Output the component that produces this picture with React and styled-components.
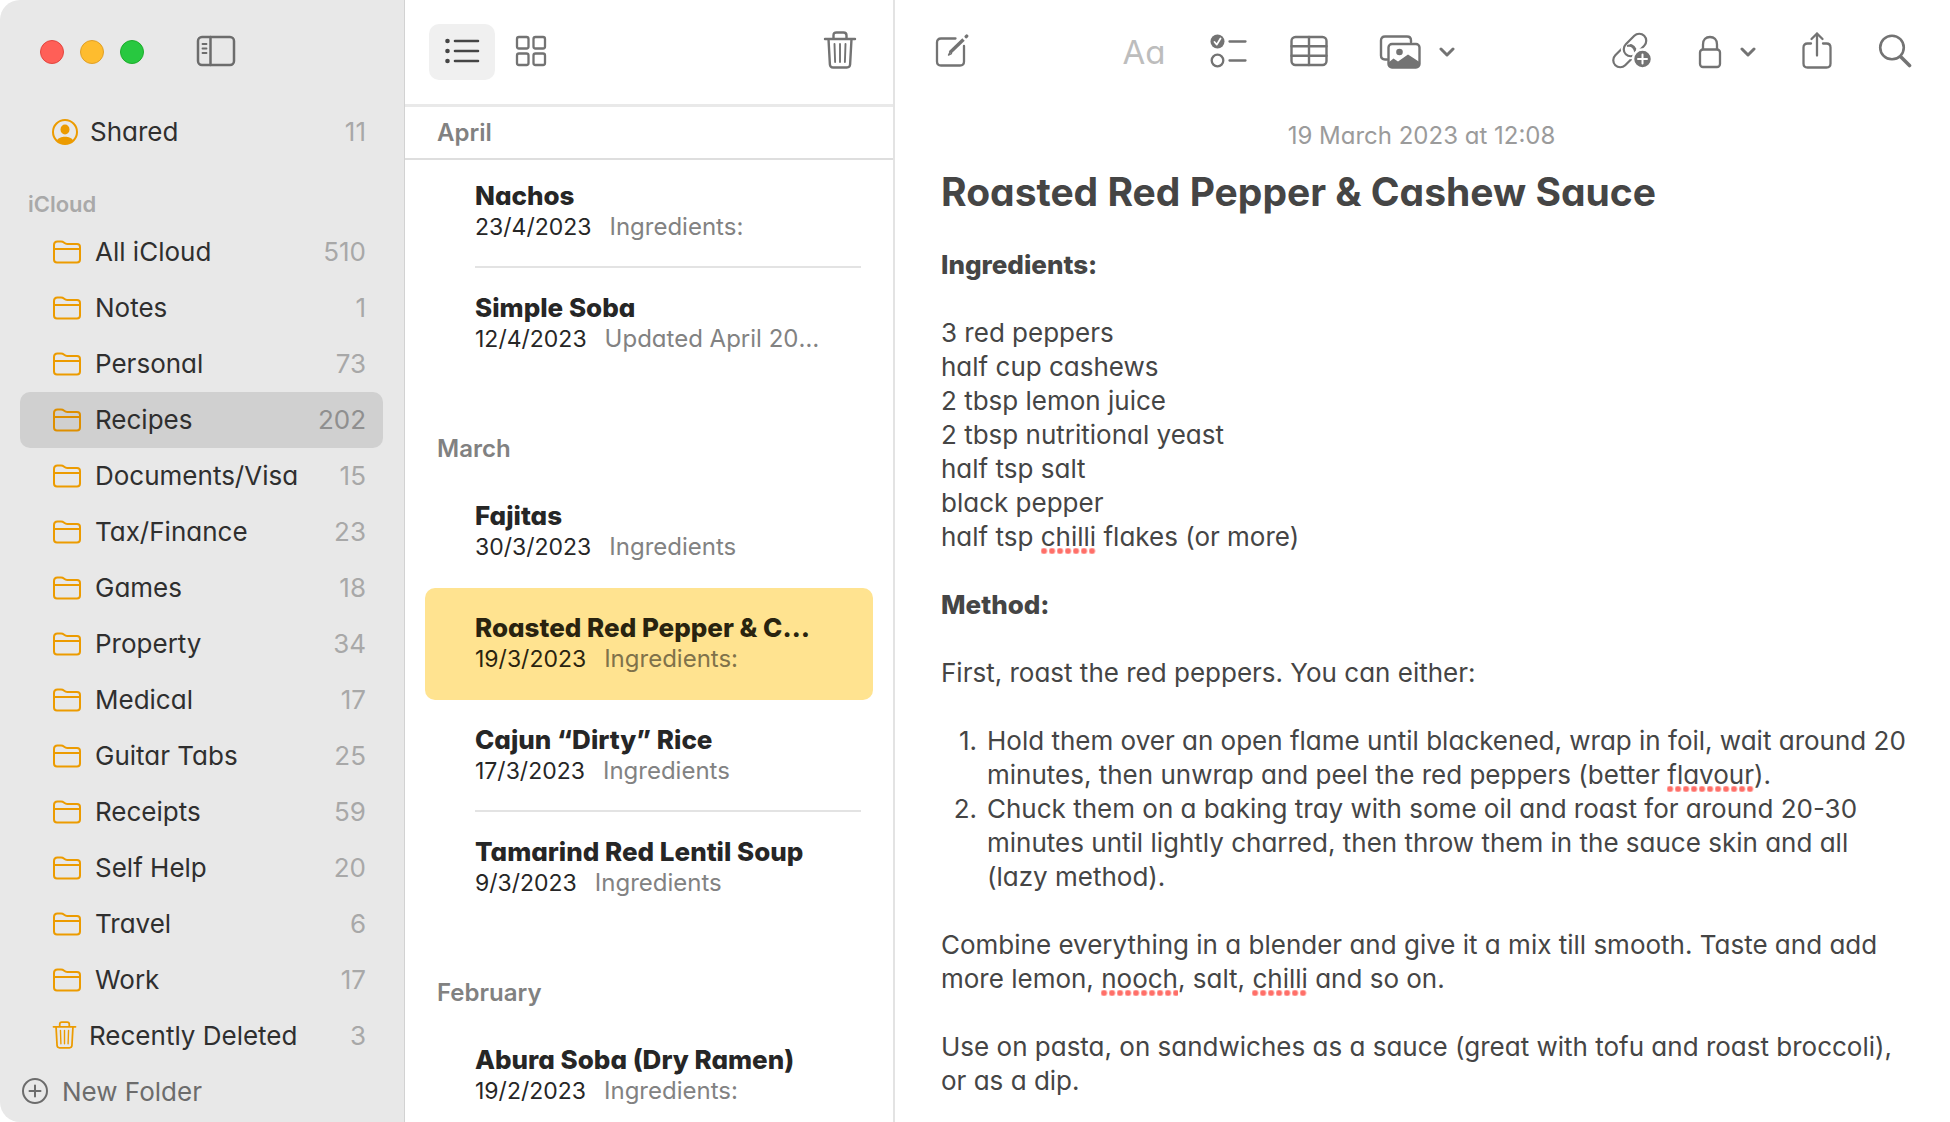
import React from "react";
import styled, { createGlobalStyle } from "styled-components";

const Global = createGlobalStyle`
  *, *::before, *::after { box-sizing: border-box; }
  body {
    margin: 0;
    background: #fff;
    font-family: Inter, "Liberation Sans", sans-serif;
    font-feature-settings: "cv11";
  }
  button { font: inherit; font-feature-settings: inherit; color: inherit; border: 0; background: none; padding: 0; text-align: left; }
  h1, h2, p, ul, ol { margin: 0; padding: 0; }
  ul, ol { list-style: none; }
  b { font-weight: 800; }
`;

const Window = styled.div`
  display: grid;
  grid-template-columns: 405px 490px minmax(0, 1fr);
  height: 100vh;
  overflow: hidden;
  border-radius: 20px;
  background: #fff;
`;

/* Sidebar */
const Sidebar = styled.aside`
  display: flex;
  flex-direction: column;
  background: #e8e8e8;
  border-right: 1px solid #d2d2d2;
  padding: 0 21px 0 20px;
`;
const SidebarBar = styled.div`
  display: flex;
  align-items: center;
  height: 104px;
  padding-left: 20px;
  gap: 16px;
`;
const Light = styled.button`
  width: 24px;
  height: 24px;
  border-radius: 50%;
  background: ${(p) => p.$fill};
  border: 1px solid ${(p) => p.$edge};
`;
const IconButton = styled.button`
  display: inline-flex;
  align-items: center;
  gap: 18px;
  color: ${(p) => p.$color || "#737373"};
  margin-left: ${(p) => p.$left || 0}px;
`;
const FolderRow = styled.button`
  display: flex;
  align-items: center;
  width: 100%;
  height: 56px;
  padding: 0 17px 0 32px;
  gap: ${(p) => p.$gap || 13}px;
  border-radius: 10px;
  background: ${(p) => (p.$active ? "#d0d0d0" : "transparent")};
  color: #2f2f2f;
  font-size: 26px;
  line-height: 32px;
  svg { flex: none; color: ${(p) => (p.$active ? "#de8f00" : "#ec9b00")}; }
`;
const FolderName = styled.span`
  flex: 1;
  white-space: nowrap;
`;
const Count = styled.span`
  color: ${(p) => (p.$active ? "#8f8f8f" : "#a8a8a8")};
`;
const Account = styled.h2`
  height: 64px;
  padding: 30px 0 0 8px;
  font-size: 22px;
  line-height: 28px;
  font-weight: 600;
  color: #a9a9a9;
`;
const NewFolder = styled.button`
  display: flex;
  align-items: center;
  height: 56px;
  gap: 13px;
  padding-left: 1px;
  font-size: 26px;
  line-height: 32px;
  color: #6c6c6c;
`;

/* Notes list */
const NotesPane = styled.section`
  display: flex;
  flex-direction: column;
  min-height: 0;
  overflow: hidden;
  border-right: 2px solid #e3e3e3;
`;
const NotesBar = styled.header`
  flex: none;
  display: flex;
  align-items: center;
  gap: 3px;
  height: 107px;
  padding: 0 36px 0 24px;
  border-bottom: 3px solid #e9e9e9;
`;
const ViewButton = styled.button`
  display: grid;
  place-items: center;
  width: 66px;
  height: 56px;
  border-radius: 10px;
  background: ${(p) => (p.$active ? "#f0f0f0" : "transparent")};
  color: ${(p) => (p.$active ? "#454545" : "#737373")};
`;
const Spacer = styled.div`
  flex: 1;
`;
const Month = styled.h2`
  flex: none;
  height: 96px;
  padding: 54px 32px 0;
  font-size: 24px;
  line-height: 30px;
  font-weight: 600;
  font-feature-settings: normal;
  color: #818181;
`;
const PinnedMonth = styled(Month)`
  height: 53px;
  padding: 11px 32px 0;
  border-bottom: 2px solid #dedede;
  margin-bottom: -4px;
`;
const NoteList = styled.ul`
  flex: none;
  padding: 0 20px;
`;
const NoteRow = styled.button`
  display: block;
  width: 100%;
  height: 112px;
  padding: 0 12px 0 50px;
  border-radius: 10px;
  background: ${(p) => (p.$active ? "#ffe390" : "transparent")};
`;
const NoteBody = styled.div`
  height: 112px;
  padding: 24px 0 0;
  border-bottom: 2px solid ${(p) => (p.$rule ? "#e3e3e3" : "transparent")};
`;
const NoteTitle = styled.div`
  max-width: 345px;
  overflow: hidden;
  text-overflow: ellipsis;
  white-space: nowrap;
  font-size: 26px;
  line-height: 32px;
  font-weight: 800;
  color: ${(p) => (p.$active ? "#29230f" : "#262626")};
`;
const NoteMeta = styled.div`
  display: flex;
  align-items: baseline;
  gap: 18px;
  max-width: 345px;
  font-size: 23px;
  line-height: 30px;
  color: ${(p) => (p.$active ? "#29230f" : "#262626")};
`;
const Preview = styled.span`
  overflow: hidden;
  text-overflow: ellipsis;
  white-space: nowrap;
  font-size: 24px;
  color: ${(p) => (p.$active ? "#80724a" : "#828282")};
`;

/* Editor */
const Editor = styled.main`
  min-width: 0;
  overflow: hidden;
`;
const EditorBar = styled.header`
  display: flex;
  align-items: center;
  height: 104px;
  padding: 0 38px 0 40px;
`;
const Stretch = styled.div`
  flex: ${(p) => p.$grow};
`;
const Tools = styled.div`
  display: flex;
  align-items: center;
  gap: ${(p) => p.$gap}px;
`;
const TextStyle = styled.button`
  font-size: 33px;
  line-height: 40px;
  color: #bdbdbd;
`;
const Page = styled.article`
  padding: 15px 40px 0 46px;
  color: #454545;
  font-size: 26px;
  line-height: 34px;
`;
const Stamp = styled.p`
  padding-right: 8px;
  text-align: center;
  font-size: 24px;
  color: #9b9b9b;
`;
const Title = styled.h1`
  padding: 13px 0 30px;
  font-size: 39px;
  line-height: 52px;
  font-weight: 700;
`;
const Para = styled.p`
  padding-bottom: 34px;
`;
const Line = styled.span`
  display: block;
`;
const Steps = styled.ol`
  padding-bottom: 34px;
`;
const Step = styled.li`
  display: grid;
  grid-template-columns: 36px minmax(0, 1fr);
  column-gap: 10px;
`;
const Num = styled.span`
  text-align: right;
`;
const Typo = styled.span`
  background: radial-gradient(circle at 3px 3px, #ff6f68 2px, #ff6f6800 4px) 0 100% / 8px 6px repeat-x;
  padding-bottom: 2px;
`;

/* Icons */
const Svg = ({ w, h, sw = 2, children }) => (
  <svg width={w} height={h} viewBox={`0 0 ${w} ${h}`} fill="none" stroke="currentColor" strokeWidth={sw} strokeLinecap="round" strokeLinejoin="round" aria-hidden="true">
    {children}
  </svg>
);
const SidebarIcon = () => (
  <Svg w={40} h={34} sw={2.5}>
    <rect x="2" y="2" width="36" height="28" rx="4" />
    <path d="M14.500 2v28" />
    <path d="M6.500 9h4M6.500 13.500h4M6.500 18h4" strokeWidth="1.800" />
  </Svg>
);
const PersonIcon = () => (
  <Svg w={26} h={26}>
    <circle cx="13" cy="13" r="12" />
    <ellipse cx="13" cy="10.500" rx="4.500" ry="5" fill="currentColor" stroke="none" />
    <path d="M5 21.500c1-2.600 4.500-3.700 8-3.700s7 1.100 8 3.700c-2 2-5 3.500-8 3.500s-6-1.500-8-3.500z" fill="currentColor" stroke="none" />
  </Svg>
);
const FolderIcon = () => (
  <Svg w={30} h={24}>
    <path d="M2 5q0-3.500 3.500-3.500h3.500c1.500 0 2.300.5 3.200 1.200.9.800 1.600 1.200 3 1.200h9.800q3 0 3 3v12.500q0 3-3 3H5q-3 0-3-3z" />
    <path d="M2 9h26" />
  </Svg>
);
const TrashIcon = ({ w, h, room = 40 }) => (
  <svg width={w} height={h} viewBox={`0 0 34 ${room}`} fill="none" stroke="currentColor" strokeWidth="2.400" strokeLinecap="round" strokeLinejoin="round" aria-hidden="true">
    <path d="M2 9h30M10.500 9V5.500q0-3 3-3h7q3 0 3 3V9M5.500 9l1.400 25.500q.2 3 3.200 3h13.800q3 0 3.200-3L28.500 9" />
    <path d="M11.500 14l.6 18M17 14v18M22.500 14l-.6 18" strokeWidth="1.900" />
  </svg>
);
const PlusCircle = () => (
  <Svg w={28} h={28}>
    <circle cx="14" cy="13" r="12" />
    <path d="M14 7.500v11M8.500 13h11" />
  </Svg>
);
const ListIcon = () => (
  <Svg w={36} h={30} sw={2.6}>
    <path d="M11 4h23M11 14h23M11 24h23" />
    <g fill="currentColor" stroke="none">
      <circle cx="3.500" cy="4" r="2.300" />
      <circle cx="3.500" cy="14" r="2.300" />
      <circle cx="3.500" cy="24" r="2.300" />
    </g>
  </Svg>
);
const GridIcon = () => (
  <Svg w={32} h={34} sw={2.3}>
    <rect x="2" y="2" width="11.500" height="11.500" rx="2" />
    <rect x="18.500" y="2" width="11.500" height="11.500" rx="2" />
    <rect x="2" y="18.500" width="11.500" height="11.500" rx="2" />
    <rect x="18.500" y="18.500" width="11.500" height="11.500" rx="2" />
  </Svg>
);
const ComposeIcon = () => (
  <Svg w={34} h={38} sw={2.3}>
    <path d="M20.500 5.500H6q-4 0-4 4V28.500q0 4 4 4h19q4 0 4-4V13" />
    <path d="M28.500 6.500L15 19.500" strokeWidth="3.400" strokeLinecap="butt" />
    <path d="M15 19l-1.500 3 3-1.400" strokeWidth="1.400" />
    <path d="M31.200 3.600l.5-.5" strokeWidth="3.400" />
  </Svg>
);
const ChecklistIcon = () => (
  <Svg w={38} h={38} sw={2.3}>
    <circle cx="8.500" cy="8.500" r="7" fill="currentColor" stroke="none" />
    <path d="M5.500 9l2.300 2.600L11.500 5.500" stroke="#fff" strokeWidth="1.800" />
    <circle cx="8.500" cy="27.500" r="5.800" />
    <path d="M20.500 8.500h16M20.500 27.500h16" />
  </Svg>
);
const TableIcon = () => (
  <Svg w={38} h={34} sw={2.4}>
    <rect x="1.500" y="2" width="35" height="28" rx="4" />
    <path d="M1.500 11.300h35M1.500 20.700h35M19 2v28" />
  </Svg>
);
const MediaIcon = () => (
  <Svg w={42} h={36} sw={2.4}>
    <path d="M8 25.500H6q-4 0-4-4V6.500q0-4 4-4h22q4 0 4 4V8" />
    <rect x="9.500" y="10" width="31" height="23.500" rx="3.500" />
    <circle cx="20.500" cy="18" r="3.300" fill="currentColor" stroke="none" />
    <path d="M9.500 28.500l5-4 4.500 3L29 20.500 40.500 28v3q0 2.500-3 2.500h-25q-3 0-3-2.500z" fill="currentColor" stroke="none" />
  </Svg>
);
const Chevron = () => (
  <Svg w={16} h={12} sw={3}>
    <path d="M2 3l6 6 6-6" />
  </Svg>
);
const LinkIcon = () => (
  <Svg w={40} h={40} sw={2.2}>
    <rect x="-13" y="-7" width="26" height="14" rx="7" transform="translate(12.500 24) rotate(-45)" />
    <rect x="-13" y="-7" width="26" height="14" rx="7" transform="translate(23 13) rotate(-45)" stroke="#fff" strokeWidth="6" />
    <rect x="-13" y="-7" width="26" height="14" rx="7" transform="translate(23 13) rotate(-45)" />
    <path d="M16 13.800c3.500-.8 7.200 2 7.200 6.400" />
    <circle cx="30.500" cy="27" r="9.500" fill="currentColor" stroke="#fff" strokeWidth="2.500" />
    <path d="M30.500 22.500v9M26 27h9" stroke="#fff" strokeWidth="2" />
  </Svg>
);
const LockIcon = () => (
  <Svg w={24} h={36} sw={2.3}>
    <rect x="2" y="15.500" width="20" height="17.500" rx="3" />
    <path d="M5 15V10.500c0-5 3-7.500 7-7.500s7 2.500 7 7.500v4.500" />
  </Svg>
);
const ShareIcon = () => (
  <Svg w={30} h={42} sw={2.3}>
    <path d="M9 12.500H5.500q-4 0-4 4V32.500q0 4 4 4h19q4 0 4-4V16.500q0-4-4-4H21" />
    <path d="M15 24.500V2.500M9.500 8L15 2.500l5.500 5.500" />
  </Svg>
);
const SearchIcon = () => (
  <Svg w={34} h={36} sw={2.6}>
    <circle cx="14" cy="13.500" r="11.800" />
    <path d="M23 23l8.500 8.500" strokeWidth="3.600" />
  </Svg>
);

const folders = [
  ["All iCloud", 510], ["Notes", 1], ["Personal", 73], ["Recipes", 202], ["Documents/Visa", 15],
  ["Tax/Finance", 23], ["Games", 18], ["Property", 34], ["Medical", 17], ["Guitar Tabs", 25],
  ["Receipts", 59], ["Self Help", 20], ["Travel", 6], ["Work", 17],
];
const april = [
  { title: "Nachos", date: "23/4/2023", preview: "Ingredients:", rule: true },
  { title: "Simple Soba", date: "12/4/2023", preview: "Updated April 2023" },
];
const march = [
  { title: "Fajitas", date: "30/3/2023", preview: "Ingredients" },
  { title: "Roasted Red Pepper & Cashew Sauce", date: "19/3/2023", preview: "Ingredients:", active: true },
  { title: "Cajun “Dirty” Rice", date: "17/3/2023", preview: "Ingredients", rule: true },
  { title: "Tamarind Red Lentil Soup", date: "9/3/2023", preview: "Ingredients" },
];
const february = [{ title: "Abura Soba (Dry Ramen)", date: "19/2/2023", preview: "Ingredients:" }];

const Folder = ({ icon, name, count, active, gap }) => (
  <li>
    <FolderRow $active={active} $gap={gap}>
      {icon}
      <FolderName>{name}</FolderName>
      <Count $active={active}>{count}</Count>
    </FolderRow>
  </li>
);
const Notes = ({ items }) => (
  <NoteList>
    {items.map((n) => (
      <li key={n.title}>
        <NoteRow $active={n.active}>
          <NoteBody $rule={n.rule}>
            <NoteTitle $active={n.active}>{n.title}</NoteTitle>
            <NoteMeta $active={n.active}>
              <span>{n.date}</span>
              <Preview $active={n.active}>{n.preview}</Preview>
            </NoteMeta>
          </NoteBody>
        </NoteRow>
      </li>
    ))}
  </NoteList>
);

export default function App() {
  return (
    <>
      <Global />
      <Window>
        <Sidebar>
          <SidebarBar>
            <Light $fill="#ff5f57" $edge="#e2463f" aria-label="Close" />
            <Light $fill="#febc2e" $edge="#e0a028" aria-label="Minimise" />
            <Light $fill="#28c840" $edge="#1dad2b" aria-label="Zoom" />
            <IconButton $left={36} $color="#6c6c6c" aria-label="Toggle sidebar"><SidebarIcon /></IconButton>
          </SidebarBar>
          <ul>
            <Folder icon={<PersonIcon />} name="Shared" count={11} gap={12} />
          </ul>
          <Account>iCloud</Account>
          <ul>
            {folders.map(([name, count]) => (
              <Folder key={name} icon={<FolderIcon />} name={name} count={count} active={name === "Recipes"} />
            ))}
            <Folder icon={<TrashIcon w={25} h={32} room={43} />} name="Recently Deleted" count={3} gap={12} />
          </ul>
          <NewFolder><PlusCircle />New Folder</NewFolder>
        </Sidebar>

        <NotesPane>
          <NotesBar>
            <ViewButton $active aria-label="List view"><ListIcon /></ViewButton>
            <ViewButton aria-label="Gallery view"><GridIcon /></ViewButton>
            <Spacer />
            <IconButton aria-label="Delete"><TrashIcon w={34} h={45} room={45} /></IconButton>
          </NotesBar>
          <PinnedMonth>April</PinnedMonth>
          <Notes items={april} />
          <Month>March</Month>
          <Notes items={march} />
          <Month>February</Month>
          <Notes items={february} />
        </NotesPane>

        <Editor>
          <EditorBar>
            <IconButton aria-label="New note"><ComposeIcon /></IconButton>
            <Stretch $grow={156} />
            <Tools $gap={43}>
              <TextStyle aria-label="Format">Aa</TextStyle>
              <IconButton aria-label="Checklist"><ChecklistIcon /></IconButton>
              <IconButton aria-label="Table"><TableIcon /></IconButton>
              <IconButton $left={8} aria-label="Media"><MediaIcon /><Chevron /></IconButton>
            </Tools>
            <Stretch $grow={160} />
            <Tools $gap={46}>
              <IconButton aria-label="Add link"><LinkIcon /></IconButton>
              <IconButton aria-label="Lock"><LockIcon /><Chevron /></IconButton>
              <IconButton aria-label="Share"><ShareIcon /></IconButton>
              <IconButton aria-label="Search"><SearchIcon /></IconButton>
            </Tools>
          </EditorBar>
          <Page>
            <Stamp>19 March 2023 at 12:08</Stamp>
            <Title>Roasted Red Pepper &amp; Cashew Sauce</Title>
            <Para><b>Ingredients:</b></Para>
            <Para>
              <Line>3 red peppers</Line>
              <Line>half cup cashews</Line>
              <Line>2 tbsp lemon juice</Line>
              <Line>2 tbsp nutritional yeast</Line>
              <Line>half tsp salt</Line>
              <Line>black pepper</Line>
              <Line>half tsp <Typo>chilli</Typo> flakes (or more)</Line>
            </Para>
            <Para><b>Method:</b></Para>
            <Para>First, roast the red peppers. You can either:</Para>
            <Steps>
              <Step>
                <Num>1.</Num>
                <span>Hold them over an open flame until blackened, wrap in foil, wait around 20 minutes, then unwrap and peel the red peppers (better <Typo>flavour</Typo>).</span>
              </Step>
              <Step>
                <Num>2.</Num>
                <span>Chuck them on a baking tray with some oil and roast for around 20-30 minutes until lightly charred, then throw them in the sauce skin and all (lazy method).</span>
              </Step>
            </Steps>
            <Para>Combine everything in a blender and give it a mix till smooth. Taste and add more lemon, <Typo>nooch</Typo>, salt, <Typo>chilli</Typo> and so on.</Para>
            <Para>Use on pasta, on sandwiches as a sauce (great with tofu and roast broccoli), or as a dip.</Para>
          </Page>
        </Editor>
      </Window>
    </>
  );
}
